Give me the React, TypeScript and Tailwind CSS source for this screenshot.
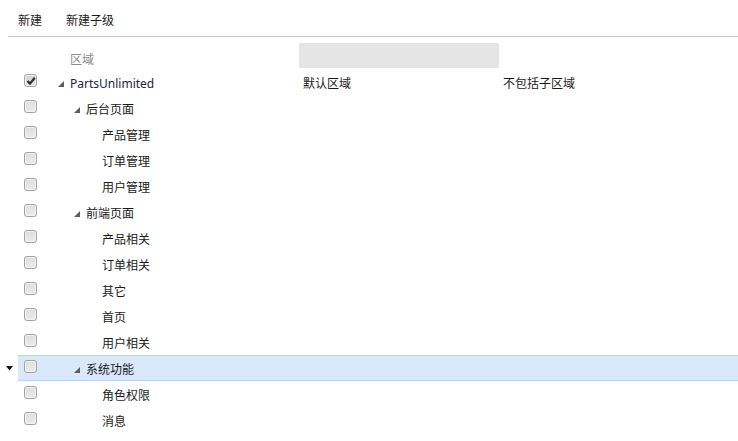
import React from "react";

type Node = {
  name: string;
  level: number;
  expandable?: boolean;
  checked?: boolean;
  selected?: boolean;
  col2?: string;
  col3?: string;
};

const nodes: Node[] = [
  { name: "PartsUnlimited", level: 0, expandable: true, checked: true, col2: "默认区域", col3: "不包括子区域" },
  { name: "后台页面", level: 1, expandable: true },
  { name: "产品管理", level: 2 },
  { name: "订单管理", level: 2 },
  { name: "用户管理", level: 2 },
  { name: "前端页面", level: 1, expandable: true },
  { name: "产品相关", level: 2 },
  { name: "订单相关", level: 2 },
  { name: "其它", level: 2 },
  { name: "首页", level: 2 },
  { name: "用户相关", level: 2 },
  { name: "系统功能", level: 1, expandable: true, selected: true },
  { name: "角色权限", level: 2 },
  { name: "消息", level: 2 },
];

const indent = ["pl-0", "pl-[16px]", "pl-[32px]"];

function CheckBox({ checked }: { checked?: boolean }) {
  return (
    <span className={`relative flex w-[13px] h-[13px] rounded-[3px] border border-[#a3a3a3] bg-gradient-to-b shadow-[inset_0_0_0_1px_#f2f2f2] ${checked ? "from-[#d2d2d2] to-[#e2e2e2]" : "from-[#dedede] to-[#ececec]"}`}>
      {checked && (
        <svg className="absolute left-[1px] top-[1px]" width="10" height="10" viewBox="0 0 10 10">
          <path d="M1.5 5 L4 7.6 L8.8 1.8" fill="none" stroke="#2e2e2e" strokeWidth="2.2" />
        </svg>
      )}
    </span>
  );
}

function Expander() {
  return (
    <svg width="6" height="6" viewBox="0 0 6 6" className="mt-[1px]">
      <polygon points="6,0 6,6 0,6" fill="#5c5c5c" />
    </svg>
  );
}

export default function App() {
  return (
    <div className="w-[738px] h-[441px] bg-white text-[12px] text-[#1a1a1a] overflow-hidden" style={{ fontFamily: '"Noto Sans", "Noto Sans CJK SC", sans-serif' }}>
      <div className="flex items-center h-[36px] pt-[6px] pl-[18px] gap-[24px]">
        <span>新建</span>
        <span>新建子级</span>
      </div>
      <div className="ml-[8px] h-px bg-[#c8c8c8]" />

      <div className="flex h-[26px] mt-[6px] pl-[58px]">
        <div className="w-[241px] pl-[12px] pt-[8px] text-[#8a8a8a]">区域</div>
        <div className="w-[200px] h-[25px] bg-[#e5e5e5]" />
      </div>

      <div className="flex flex-col">
        {nodes.map((n) => (
          <div key={n.name} className="flex h-[26px]">
            <div className="w-[18px] flex items-center pl-[6px]">
              {n.selected && (
                <svg width="7" height="5" viewBox="0 0 7 5">
                  <polygon points="0,0 7,0 3.5,4.5" fill="#111" />
                </svg>
              )}
            </div>
            <div className={`flex flex-1 items-center border-y ${n.selected ? "bg-[#d9e8fa] border-[#b7d5fb]" : "border-transparent"}`}>
              <div className="w-[40px] pl-[6px] -mt-[3px]">
                <CheckBox checked={n.checked} />
              </div>
              <div className={`w-[241px] flex items-center mt-[3px] ${indent[n.level]}`}>
                <span className="w-[12px] flex">{n.expandable && <Expander />}</span>
                <span className={n.level === 0 ? "text-[#1c2440]" : ""}>{n.name}</span>
              </div>
              <div className="w-[200px] pl-[4px] mt-[3px]">{n.col2}</div>
              <div className="pl-[4px] mt-[3px]">{n.col3}</div>
            </div>
          </div>
        ))}
      </div>
    </div>
  );
}
